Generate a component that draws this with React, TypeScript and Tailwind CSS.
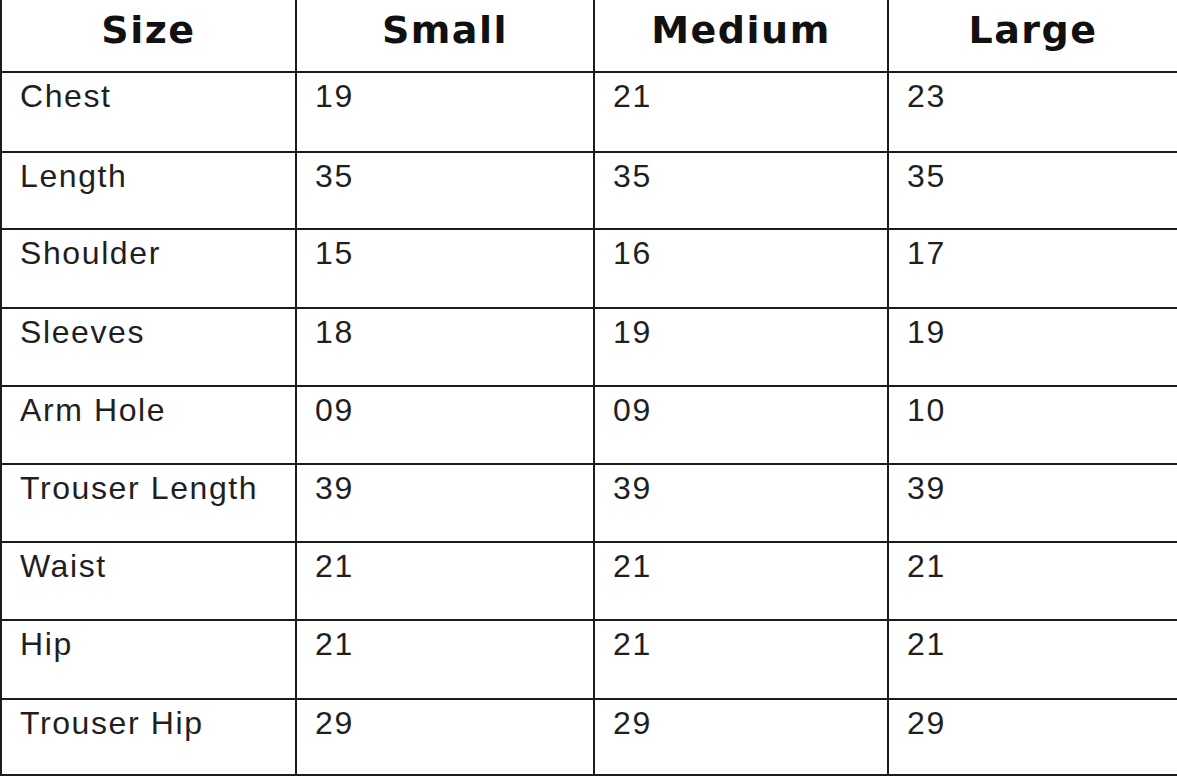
const headers = ["Size", "Small", "Medium", "Large"];

const rows: [string, string, string, string][] = [
  ["Chest", "19", "21", "23"],
  ["Length", "35", "35", "35"],
  ["Shoulder", "15", "16", "17"],
  ["Sleeves", "18", "19", "19"],
  ["Arm Hole", "09", "09", "10"],
  ["Trouser Length", "39", "39", "39"],
  ["Waist", "21", "21", "21"],
  ["Hip", "21", "21", "21"],
  ["Trouser Hip", "29", "29", "29"],
];

// row heights incl. bottom border, read off the screenshot
const rowHeights = ["h-[80px]", "h-[77px]", "h-[79px]", "h-[78px]", "h-[78px]", "h-[78px]", "h-[78px]", "h-[79px]", "h-[76px]"];

export default function App() {
  return (
    <div className="h-[780px] w-[1177px] overflow-hidden bg-white">
      <div className="grid grid-cols-[295px_298px_294px_1fr] border-l-2 border-[#1c1c1c]">
        {/* Header */}
        {headers.map((h, i) => (
          <div
            key={h}
            className={`h-[73px] border-b-2 border-[#1c1c1c] pt-2 text-center font-['DejaVu_Sans',sans-serif] text-[38px] font-bold leading-[44px] tracking-[1.5px] text-[#111] ${i < 3 ? "border-r-2" : ""}`}
          >
            {h}
          </div>
        ))}

        {/* Body */}
        {rows.map((r, ri) =>
          r.map((cell, ci) => (
            <div
              key={`${ri}-${ci}`}
              className={`${rowHeights[ri]} border-b-2 border-[#1c1c1c] pl-[18px] pt-[5px] font-['Liberation_Sans',Arial,sans-serif] text-[32px] leading-[36px] tracking-[1.6px] text-[#1f1f1f] ${ci < 3 ? "border-r-2" : ""}`}
            >
              {cell}
            </div>
          ))
        )}
      </div>
    </div>
  );
}
